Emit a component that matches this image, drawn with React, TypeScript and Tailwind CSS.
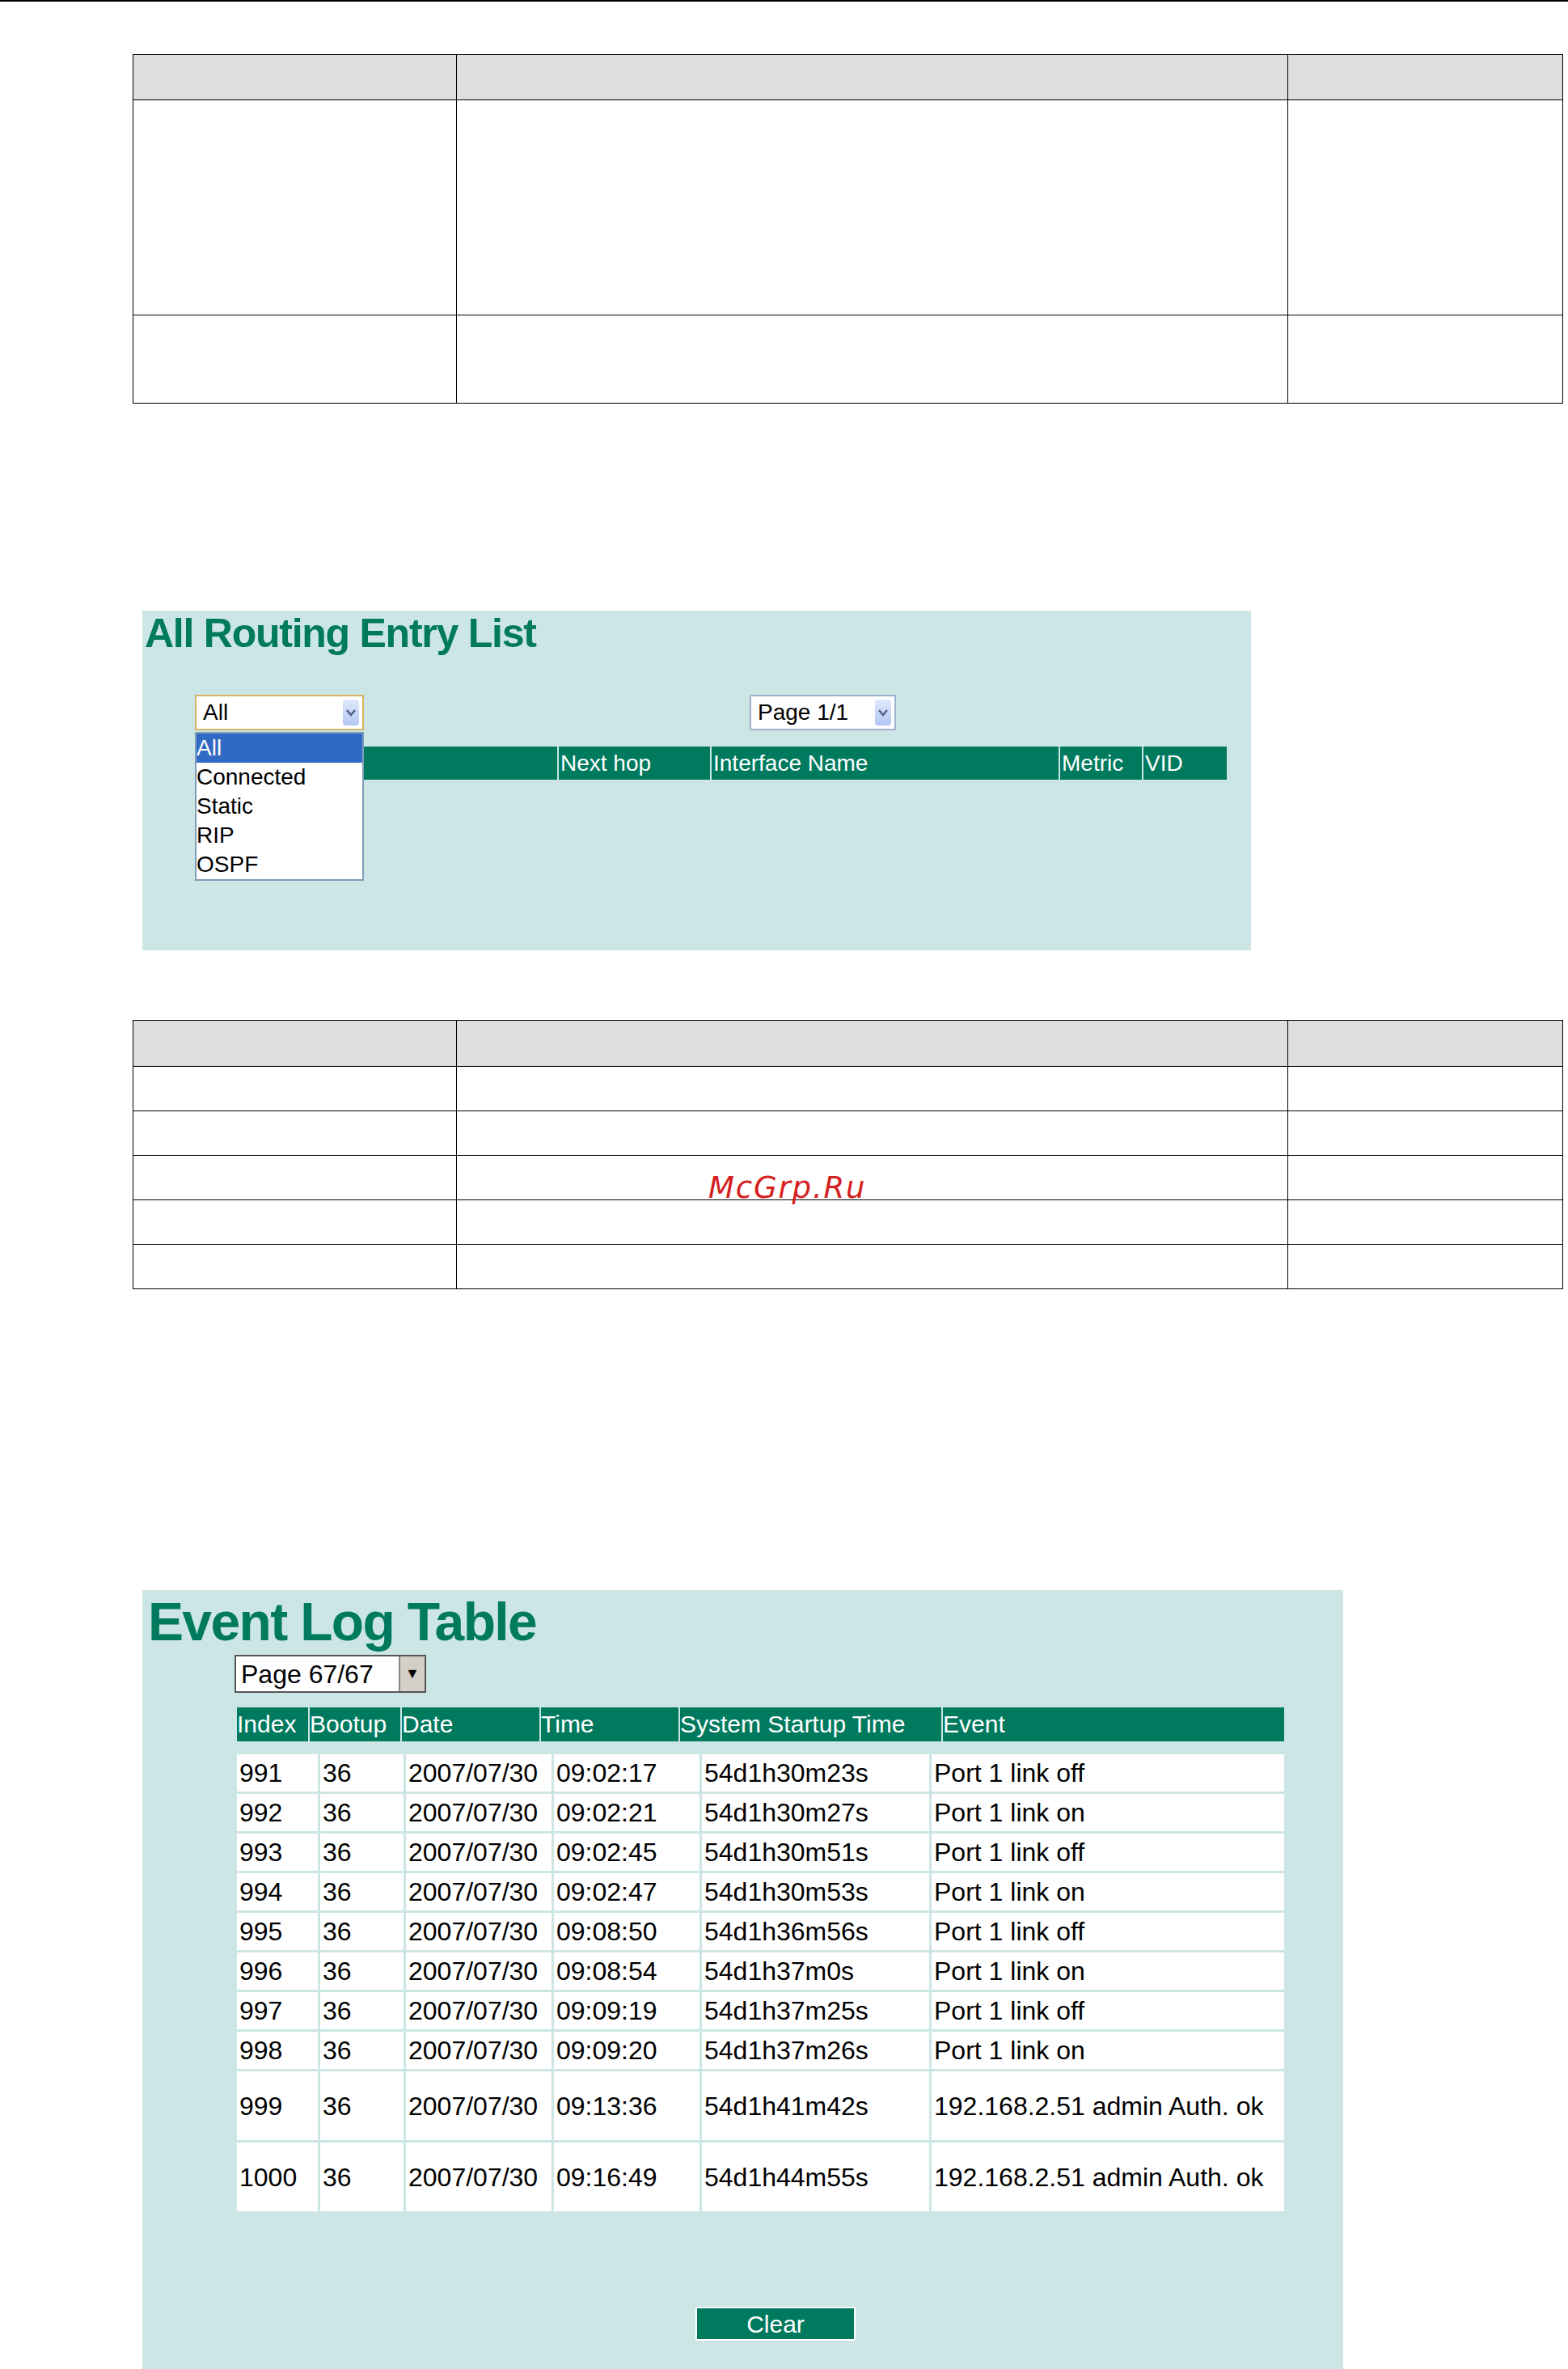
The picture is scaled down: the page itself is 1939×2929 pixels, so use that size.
const events = [
  ["991", "36", "2007/07/30", "09:02:17", "54d1h30m23s", "Port 1 link off"],
  ["992", "36", "2007/07/30", "09:02:21", "54d1h30m27s", "Port 1 link on"],
  ["993", "36", "2007/07/30", "09:02:45", "54d1h30m51s", "Port 1 link off"],
  ["994", "36", "2007/07/30", "09:02:47", "54d1h30m53s", "Port 1 link on"],
  ["995", "36", "2007/07/30", "09:08:50", "54d1h36m56s", "Port 1 link off"],
  ["996", "36", "2007/07/30", "09:08:54", "54d1h37m0s", "Port 1 link on"],
  ["997", "36", "2007/07/30", "09:09:19", "54d1h37m25s", "Port 1 link off"],
  ["998", "36", "2007/07/30", "09:09:20", "54d1h37m26s", "Port 1 link on"],
  ["999", "36", "2007/07/30", "09:13:36", "54d1h41m42s", "192.168.2.51 admin Auth. ok"],
  ["1000", "36", "2007/07/30", "09:16:49", "54d1h44m55s", "192.168.2.51 admin Auth. ok"],
];

const evWidths = ["w-[100px]", "w-[103px]", "w-[180px]", "w-[180px]", "w-[281px]", "flex-1"];

function Chevron() {
  return (
    <div className="w-[20px] h-[32px] bg-gradient-to-b from-[#dfe8fb] to-[#b3c7f5] rounded-sm flex items-center justify-center">
      <svg width="14" height="10" viewBox="0 0 14 10">
        <path d="M2 2 L7 8 L12 2" stroke="#4d6185" strokeWidth="2.5" fill="none" />
      </svg>
    </div>
  );
}

function DocTable({ rows, header }: { rows: string[]; header: string }) {
  return (
    <div className="border border-black">
      <div className={`flex ${header} bg-[#dedede] border-b border-black`}>
        <div className="w-[400px] border-r border-black" />
        <div className="w-[1028px] border-r border-black" />
        <div className="flex-1" />
      </div>
      {rows.map((h, i) => (
        <div key={i} className={`flex ${h} ${i < rows.length - 1 ? "border-b border-black" : ""}`}>
          <div className="w-[400px] border-r border-black" />
          <div className="w-[1028px] border-r border-black" />
          <div className="flex-1" />
        </div>
      ))}
    </div>
  );
}

export default function App() {
  return (
    <div className="w-[1939px] h-[2929px] bg-white relative overflow-hidden" style={{ fontFamily: '"Liberation Sans", Arial, sans-serif' }}>
      <div className="h-[2px] bg-black" />
      <div className="pl-[164px] pr-[6px] pt-[65px]">
        <DocTable header="h-[56px]" rows={["h-[266px]", "h-[108px]"]} />
      </div>

      {/* Routing panel */}
      <div className="ml-[176px] mt-[256px] w-[1371px] h-[420px] bg-[#cce6e5] relative">
        <div className="pl-[3px] pt-[2px] text-[50px] font-bold text-[#007a5e] tracking-tight leading-[52px]">All Routing Entry List</div>
        <div className="flex items-center mt-[50px] ml-[65px]">
          <div className="w-[209px] h-[44px] bg-white border-2 border-[#d9b562] flex items-center justify-between pl-2 pr-[4px] text-[28px] text-black">
            All <Chevron />
          </div>
          <div className="ml-[477px] w-[181px] h-[44px] bg-white border-2 border-[#9fb3d0] flex items-center justify-between pl-2 pr-[4px] text-[28px] text-black">
            Page 1/1 <Chevron />
          </div>
        </div>
        <div className="flex ml-[67px] mr-[30px] mt-[20px] h-[41px] bg-[#007a5e] text-white text-[28px] leading-[41px]">
          <div className="w-[448px] border-r-2 border-[#cce6e5] pl-[20px]">Destination</div>
          <div className="w-[189px] border-r-2 border-[#cce6e5] pl-[2px]">Next hop</div>
          <div className="w-[431px] border-r-2 border-[#cce6e5] pl-[2px]">Interface Name</div>
          <div className="w-[103px] border-r-2 border-[#cce6e5] pl-[2px]">Metric</div>
          <div className="flex-1 pl-[2px]">VID</div>
        </div>
        <div className="absolute left-[65px] top-[150px] w-[209px] border-2 border-[#7f9db9] bg-white text-[28px] leading-[36px] text-black">
          <div className="bg-[#316ac5] text-white">All</div>
          <div>Connected</div>
          <div>Static</div>
          <div>RIP</div>
          <div>OSPF</div>
        </div>
      </div>

      <div className="pl-[164px] pr-[6px] mt-[86px] relative">
        <DocTable header="h-[57px]" rows={["h-[55px]", "h-[55px]", "h-[55px]", "h-[55px]", "h-[54px]"]} />
        <div className="absolute left-[876px] top-[180px] text-[37px] italic text-[#d42020] tracking-wider" style={{ fontFamily: '"DejaVu Sans", sans-serif' }}>McGrp.Ru</div>
      </div>

      {/* Event log panel */}
      <div className="ml-[176px] mt-[372px] w-[1485px] h-[964px] bg-[#cce6e5] flex flex-col">
        <div className="pl-[7px] pt-[4px] text-[66px] font-bold text-[#007a5e] leading-[70px] tracking-tight">Event Log Table</div>
        <div className="ml-[114px] mt-[6px] w-[237px] h-[47px] bg-white border-2 border-[#555] flex items-center justify-between pl-[6px] text-[32px] text-black">
          Page 67/67
          <div className="w-[32px] h-full bg-[#d4d0c8] border-l-2 border-[#888] flex items-center justify-center text-[18px]">▼</div>
        </div>
        <div className="flex ml-[117px] mr-[73px] mt-[18px] h-[42px] bg-[#007a5e] text-white text-[30px] leading-[42px]">
          <div className="w-[90px] border-r-2 border-[#cce6e5]">Index</div>
          <div className="w-[114px] border-r-2 border-[#cce6e5]">Bootup</div>
          <div className="w-[172px] border-r-2 border-[#cce6e5]">Date</div>
          <div className="w-[172px] border-r-2 border-[#cce6e5]">Time</div>
          <div className="w-[325px] border-r-2 border-[#cce6e5]">System Startup Time</div>
          <div className="flex-1">Event</div>
        </div>
        <div className="ml-[117px] mr-[73px] mt-[16px] flex flex-col gap-[3px]">
          {events.map((r) => (
            <div key={r[0]} className={`flex gap-[3px] text-[32px] text-black ${r[5].length > 20 ? "h-[85px]" : "h-[46px]"}`}>
              {r.map((c, j) => (
                <div key={j} className={`${evWidths[j]} bg-white flex items-center pl-[3px] leading-[38px]`}>
                  <span className={j === 5 ? "max-w-[410px]" : ""}>{c}</span>
                </div>
              ))}
            </div>
          ))}
        </div>
        <div className="mt-[118px] self-start ml-[684px] w-[198px] h-[42px] bg-[#007a5e] border-2 border-white text-white text-[30px] flex items-center justify-center">Clear</div>
      </div>
    </div>
  );
}
